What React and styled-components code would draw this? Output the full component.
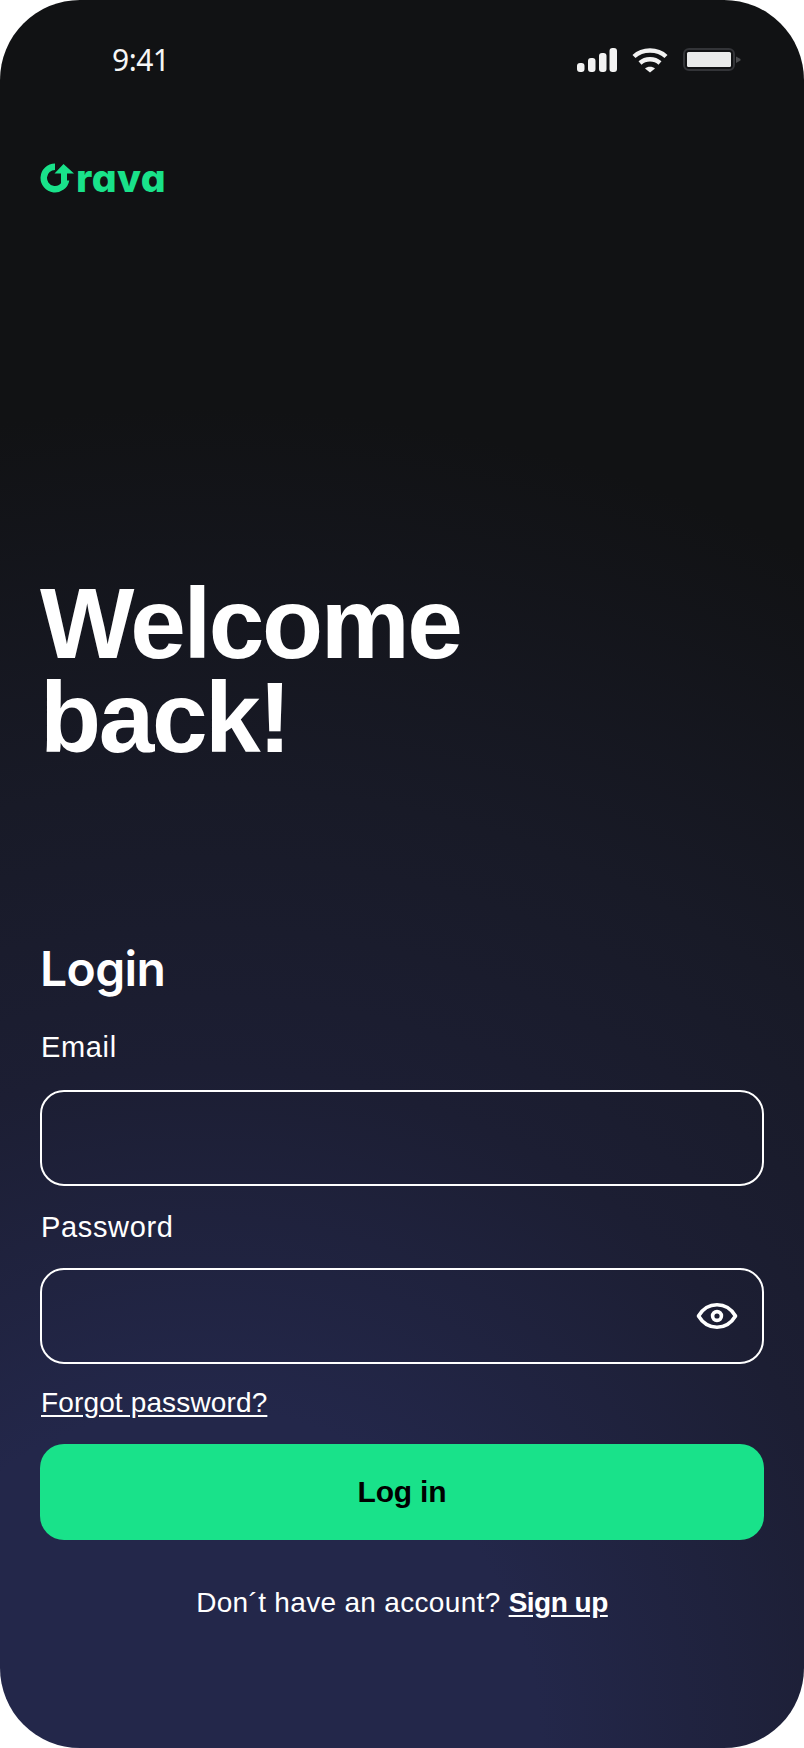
import React from "react";
import styled, { createGlobalStyle } from "styled-components";

const Global = createGlobalStyle`
  html, body { margin: 0; padding: 0; background: #fff; }
  #root { width: 804px; height: 1748px; }
`;

const sans = `"Liberation Sans", Arial, sans-serif`;

const Screen = styled.main`
  box-sizing: border-box;
  width: 804px;
  height: 1748px;
  border-radius: 80px;
  overflow: hidden;
  display: flex;
  flex-direction: column;
  padding: 0 40px;
  background: radial-gradient(circle at 200px 1748px, #23274a 0, #23274a 340px, #1c1e33 680px, #181a27 960px, #111214 1340px);
  color: #fff;
  font-family: ${sans};
`;

const StatusBar = styled.header`
  height: 62px;
  padding-top: 29px;
  display: flex;
  align-items: center;
  justify-content: space-between;
`;

const Clock = styled.span`
  margin-left: 72px;
  font: 400 30px/40px "Noto Sans", sans-serif;
  letter-spacing: -0.5px;
  color: #f6f6f6;
`;

const StatusIcons = styled.div`
  display: flex;
  align-items: center;
  gap: 15px;
  margin-right: 23px;
`;

const Logo = styled.div`
  margin-top: 69px;
  height: 36px;
  display: flex;
  align-items: center;
  color: #19e28a;
`;

const LogoText = styled.span`
  margin-left: -1px;
  font: 800 39px/36px Inter, sans-serif;
  font-feature-settings: "cv11";
  letter-spacing: 0.4px;
`;

const Hero = styled.h1`
  margin: 380px 0 0;
  font: 700 100px/94px ${sans};
  letter-spacing: -2.4px;
  color: #fff;
`;

const Heading = styled.h2`
  margin: 178px 0 0;
  font: 600 48px/54px Inter, sans-serif;
  letter-spacing: -0.6px;
`;

const Label = styled.label`
  display: block;
  font: 400 29px/32px ${sans};
  letter-spacing: 0.65px;
  margin: ${(p) => p.$top}px 0 ${(p) => p.$gap}px 1px;
`;

const Field = styled.div`
  box-sizing: border-box;
  height: 96px;
  border: 2px solid #fff;
  border-radius: 24px;
  display: flex;
  align-items: center;
  justify-content: flex-end;
  padding-right: 24px;
`;

const TextLink = styled.a`
  display: block;
  margin: 23px 0 0 1px;
  font: 400 28px/32px ${sans};
  letter-spacing: 0.14px;
  color: #fff;
  text-decoration: underline;
  text-underline-offset: 3px;
`;

const Submit = styled.button`
  display: block;
  width: 100%;
  height: 96px;
  margin-top: 25px;
  border: 0;
  border-radius: 24px;
  background: #19e28a;
  color: #000;
  font: 700 30px/36px ${sans};
  letter-spacing: -0.2px;
`;

const Footer = styled.p`
  margin: 45px 0 0;
  text-align: center;
  font: 400 28px/36px ${sans};
  letter-spacing: 0.32px;
`;

const SignUp = styled.a`
  font-weight: 700;
  color: #fff;
  letter-spacing: -0.5px;
  text-decoration: underline;
  text-underline-offset: 3px;
`;

const Signal = () => (
  <svg width="40" height="24" viewBox="0 0 40 24" fill="#f2f2f2">
    <rect x="0" y="15" width="7.5" height="9" rx="3" />
    <rect x="11" y="10" width="7.5" height="14" rx="3" />
    <rect x="22" y="5" width="7.5" height="19" rx="3" />
    <rect x="32.5" y="0" width="7.5" height="24" rx="3" />
  </svg>
);

const Wifi = () => (
  <svg width="36" height="26" viewBox="0 0 36 26" fill="none" stroke="#f2f2f2" strokeWidth="4.4">
    <path d="M2 9.5C10.5 1.5 25.5 1.5 34 9.5" />
    <path d="M8 16C13.5 11 22.5 11 28 16" />
    <path d="M13 21.5L18 25.5L23 21.5C20.5 19 15.5 19 13 21.5Z" fill="#f2f2f2" stroke="none" />
  </svg>
);

const Battery = () => (
  <svg width="58" height="24" viewBox="0 0 58 24">
    <rect x="1" y="1" width="50" height="21" rx="5" fill="none" stroke="#333438" strokeWidth="2" />
    <rect x="4" y="4" width="44" height="15" rx="1.5" fill="#e9eaea" />
    <path d="M53 8.5L57.5 11V12.5L53 15Z" fill="#4a4b4e" />
  </svg>
);

const LogoMark = () => (
  <svg width="37" height="30" viewBox="0 0 37 30" style={{ flex: "none" }}>
    <path d="M15 0.5A14.5 14.5 0 1 0 29.3 17.5H22.6A8 8 0 1 1 15 7Z" fill="#19e28a" />
    <path d="M23.5 1L34 10.5H27V20H21V10.5H14.5Z" fill="#19e28a" />
  </svg>
);

const Eye = () => (
  <svg width="42" height="28" viewBox="0 0 42 28" fill="none" stroke="#fff" strokeWidth="3.6">
    <path d="M2.5 14C7 6.5 13.5 2.8 21 2.8S35 6.5 39.5 14C35 21.5 28.5 25.2 21 25.2S7 21.5 2.5 14Z" strokeLinejoin="round" />
    <circle cx="21" cy="14" r="4.4" />
  </svg>
);

export default function App() {
  return (
    <>
      <Global />
      <Screen>
        <StatusBar>
          <Clock>9:41</Clock>
          <StatusIcons>
            <Signal />
            <Wifi />
            <Battery />
          </StatusIcons>
        </StatusBar>
        <Logo>
          <LogoMark />
          <LogoText>rava</LogoText>
        </Logo>
        <Hero>
          Welcome
          <br />
          back!
        </Hero>
        <Heading>Login</Heading>
        <Label $top={35} $gap={27}>Email</Label>
        <Field />
        <Label $top={25} $gap={25}>Password</Label>
        <Field>
          <Eye />
        </Field>
        <TextLink>Forgot password?</TextLink>
        <Submit>Log in</Submit>
        <Footer>
          Don´t have an account? <SignUp>Sign up</SignUp>
        </Footer>
      </Screen>
    </>
  );
}
